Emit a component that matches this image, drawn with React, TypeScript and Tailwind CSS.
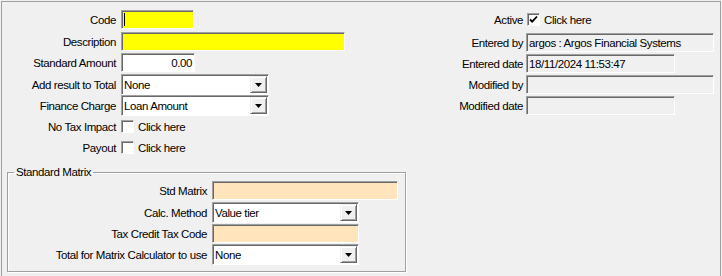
import type { ReactNode } from "react";

const sunken =
  "border border-t-[#a0a0a0] border-l-[#a0a0a0] border-r-white border-b-white shadow-[inset_1px_1px_0_#696969]";

const Row = ({ label, labelW, gap, children, className = "" }: { label: string; labelW: string; gap: string; children: ReactNode; className?: string }) => (
  <div className={`flex items-center h-[21px] ${className}`}>
    <div className={`${labelW} text-right whitespace-nowrap shrink-0`}>{label}</div>
    <div className={`${gap} flex items-center`}>{children}</div>
  </div>
);

const TextBox = ({ w, bg, value, align = "left", caret }: { w: string; bg: string; value?: string; align?: "left" | "right"; caret?: boolean }) => (
  <div className={`${w} h-[19px] ${bg} ${sunken} flex items-center px-[2px] ${align === "right" ? "justify-end" : ""}`}>
    {caret && <span className="w-px h-[13px] bg-black" />}
    <span className="whitespace-nowrap">{value}</span>
  </div>
);

const Select = ({ w, value }: { w: string; value: string }) => (
  <div className={`${w} h-[21px] bg-white ${sunken} flex items-center`}>
    <span className="flex-1 pl-[2px] whitespace-nowrap">{value}</span>
    <span className="w-[17px] h-[17px] mr-[1px] bg-[#f0f0f0] border border-t-[#f0f0f0] border-l-[#f0f0f0] border-r-[#696969] border-b-[#696969] shadow-[inset_1px_1px_0_white,inset_-1px_-1px_0_#a0a0a0] flex items-center justify-center">
      <svg width="7" height="4" viewBox="0 0 7 4">
        <path d="M0 0h7L3.5 4z" fill="#000" />
      </svg>
    </span>
  </div>
);

const Check = ({ checked = false }: { checked?: boolean }) => (
  <div className="flex items-center">
    <span className={`w-[13px] h-[13px] bg-white ${sunken} flex items-center justify-center`}>
      {checked && (
        <svg width="9" height="9" viewBox="0 0 9 9">
          <path d="M1 4.5l2.2 2.2L8 1.5" stroke="#000" strokeWidth="1.8" fill="none" />
        </svg>
      )}
    </span>
    <span className="ml-[4px]">Click here</span>
  </div>
);

export default function App() {
  return (
    <div className="w-[722px] h-[276px] bg-[#f0f0f0] pt-[1px] px-[1px] overflow-hidden text-[11.5px] leading-[14px] tracking-[-0.4px] text-black font-['Liberation_Sans',Arial,sans-serif]">
      <div className="h-[280px] border-l border-t border-r border-[#a0a0a0] flex">
        <div className="w-[418px] shrink-0 pt-[7px]">
          <Row label="Code" labelW="w-[114px]" gap="ml-[5px]">
            <TextBox w="w-[73px]" bg="bg-[#ffff00]" caret />
          </Row>
          <Row label="Description" labelW="w-[114px]" gap="ml-[5px]" className="mt-[1px]">
            <TextBox w="w-[224px]" bg="bg-[#ffff00]" />
          </Row>
          <Row label="Standard Amount" labelW="w-[114px]" gap="ml-[5px]">
            <TextBox w="w-[74px]" bg="bg-white" value="0.00" align="right" />
          </Row>
          <Row label="Add result to Total" labelW="w-[114px]" gap="ml-[5px]" className="mt-[1px]">
            <Select w="w-[148px]" value="None" />
          </Row>
          <Row label="Finance Charge" labelW="w-[114px]" gap="ml-[5px]">
            <Select w="w-[148px]" value="Loan Amount" />
          </Row>
          <Row label="No Tax Impact" labelW="w-[114px]" gap="ml-[5px]">
            <Check />
          </Row>
          <Row label="Payout" labelW="w-[114px]" gap="ml-[5px]">
            <Check />
          </Row>

          <fieldset className="ml-[5px] mt-[7px] w-[399px] border border-[#a0a0a0] shadow-[inset_1px_1px_0_white,1px_1px_0_white] pb-[6px]">
            <legend className="ml-[6px] px-[2px] leading-[14px]">Standard Matrix</legend>
            <Row label="Std Matrix" labelW="w-[199px]" gap="ml-[5px]" className="mt-[1px]">
              <TextBox w="w-[186px]" bg="bg-[#ffe4bc]" />
            </Row>
            <Row label="Calc. Method" labelW="w-[199px]" gap="ml-[5px]" className="mt-[1px]">
              <Select w="w-[147px]" value="Value tier" />
            </Row>
            <Row label="Tax Credit Tax Code" labelW="w-[199px]" gap="ml-[5px]">
              <TextBox w="w-[147px]" bg="bg-[#ffe4bc]" />
            </Row>
            <Row label="Total for Matrix Calculator to use" labelW="w-[199px]" gap="ml-[5px]">
              <Select w="w-[147px]" value="None" />
            </Row>
          </fieldset>
        </div>

        <div className="flex-1 pt-[7px]">
          <Row label="Active" labelW="w-[103px]" gap="ml-[3px]">
            <div className="ml-[1px]">
              <Check checked />
            </div>
          </Row>
          <Row label="Entered by" labelW="w-[103px]" gap="ml-[3px]" className="mt-[2px]">
            <TextBox w="w-[188px]" bg="bg-[#f0f0f0]" value="argos : Argos Financial Systems" />
          </Row>
          <Row label="Entered date" labelW="w-[103px]" gap="ml-[3px]">
            <TextBox w="w-[149px]" bg="bg-[#f0f0f0]" value="18/11/2024 11:53:47" />
          </Row>
          <Row label="Modified by" labelW="w-[103px]" gap="ml-[3px]">
            <TextBox w="w-[188px]" bg="bg-[#f0f0f0]" />
          </Row>
          <Row label="Modified date" labelW="w-[103px]" gap="ml-[3px]">
            <TextBox w="w-[149px]" bg="bg-[#f0f0f0]" />
          </Row>
        </div>
      </div>
    </div>
  );
}
